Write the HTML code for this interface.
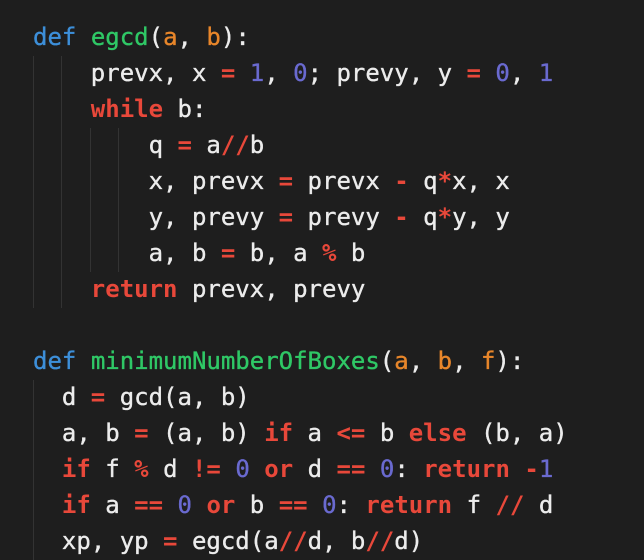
<!DOCTYPE html>
<html><head><meta charset="utf-8"><style>
html,body{margin:0;padding:0;background:#1e1e1e;width:644px;height:560px;overflow:hidden}
pre{position:absolute;left:33px;top:19px;margin:0;font-family:"DejaVu Sans Mono","Liberation Mono",monospace;font-size:24px;line-height:36px;color:#ececec;-webkit-text-stroke:0.35px currentColor}
.k{color:#3d8fd9}.f{color:#2fc866}.p{color:#e8862a}.r{color:#e8483a;font-weight:bold;-webkit-text-stroke:0}.n{color:#6a6ad0}
.g{position:absolute;width:1px;background:#333}
</style></head><body>
<div class="g" style="left:33px;top:56px;height:252px"></div>
<div class="g" style="left:61px;top:56px;height:252px"></div>
<div class="g" style="left:90px;top:128px;height:144px"></div>
<div class="g" style="left:118px;top:128px;height:144px"></div>
<div class="g" style="left:33px;top:380px;height:180px"></div>
<pre><span class="k">def</span> <span class="f">egcd</span>(<span class="p">a</span>, <span class="p">b</span>):
    prevx, x <span class="r">=</span> <span class="n">1</span>, <span class="n">0</span>; prevy, y <span class="r">=</span> <span class="n">0</span>, <span class="n">1</span>
    <span class="r">while</span> b:
        q <span class="r">=</span> a<span class="r">//</span>b
        x, prevx <span class="r">=</span> prevx <span class="r">-</span> q<span class="r">*</span>x, x
        y, prevy <span class="r">=</span> prevy <span class="r">-</span> q<span class="r">*</span>y, y
        a, b <span class="r">=</span> b, a <span class="r">%</span> b
    <span class="r">return</span> prevx, prevy

<span class="k">def</span> <span class="f">minimumNumberOfBoxes</span>(<span class="p">a</span>, <span class="p">b</span>, <span class="p">f</span>):
  d <span class="r">=</span> gcd(a, b)
  a, b <span class="r">=</span> (a, b) <span class="r">if</span> a <span class="r">&lt;=</span> b <span class="r">else</span> (b, a)
  <span class="r">if</span> f <span class="r">%</span> d <span class="r">!=</span> <span class="n">0</span> <span class="r">or</span> d <span class="r">==</span> <span class="n">0</span>: <span class="r">return</span> <span class="r">-</span><span class="n">1</span>
  <span class="r">if</span> a <span class="r">==</span> <span class="n">0</span> <span class="r">or</span> b <span class="r">==</span> <span class="n">0</span>: <span class="r">return</span> f <span class="r">//</span> d
  xp, yp <span class="r">=</span> egcd(a<span class="r">//</span>d, b<span class="r">//</span>d)</pre>
</body></html>
